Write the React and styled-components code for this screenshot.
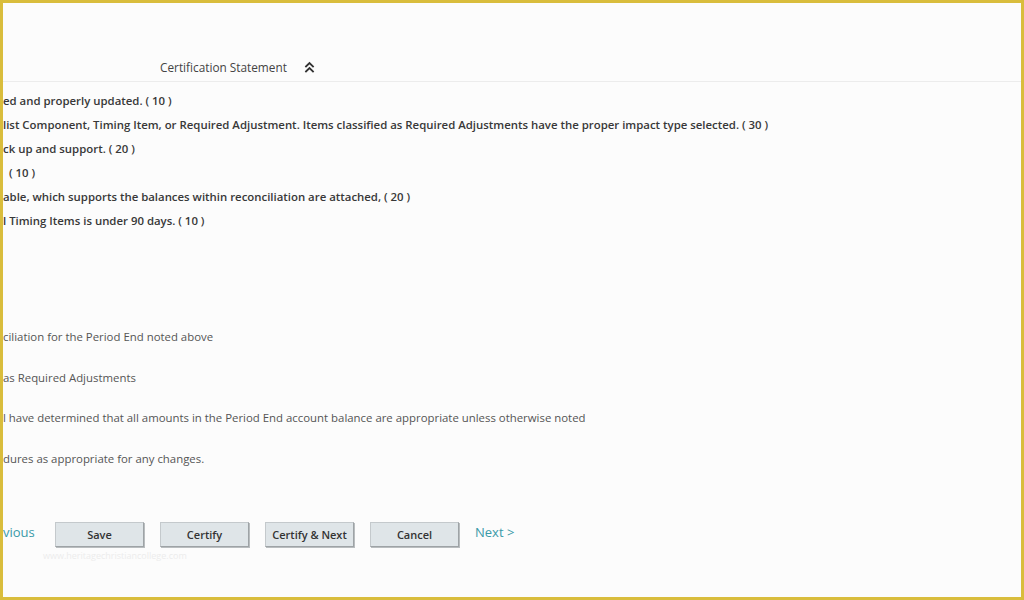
import React from 'react'
import styled, { createGlobalStyle } from 'styled-components'

const GlobalStyle = createGlobalStyle`
    body {
        margin: 0;
        background: #fcfcfc;
        font-family: "Open Sans", "Noto Sans", sans-serif;
    }
`;

const criteria = [
    'ed and properly updated. ( 10 )',
    'list Component, Timing Item, or Required Adjustment. Items classified as Required Adjustments have the proper impact type  selected. ( 30 )',
    'ck up and support. ( 20 )',
    '( 10 )',
    'able, which supports the balances within reconciliation are attached, ( 20 )',
    'l Timing Items is under 90 days. ( 10 )',
]

const statements = [
    'ciliation for the Period End noted above',
    'as Required Adjustments',
    'l have determined that all amounts in the Period End account balance are appropriate unless otherwise noted',
    'dures as appropriate for any changes.',
]

const actions = ['Save', 'Certify', 'Certify & Next', 'Cancel']

function DoubleChevron() {
    return (
        <svg width="11" height="12" viewBox="0 0 11 12" fill="none" stroke="#333" strokeWidth="1.8" strokeLinecap="square">
            <path d="M2 5.5 L5.5 2 L9 5.5" />
            <path d="M2 10.5 L5.5 7 L9 10.5" />
        </svg>
    )
}

function App() {
  return (
    <>
      <GlobalStyle />
      <Frame>
        <Header>
            <Title>Certification Statement</Title>
            <DoubleChevron />
        </Header>
        <Criteria>
            {criteria.map((c, i) => <Criterion key={i} indent={i === 3 ? 6 : 0}>{c}</Criterion>)}
        </Criteria>
        <Statements>
            {statements.map((s, i) => <Statement key={i}>{s}</Statement>)}
        </Statements>
        <Actions>
            <NavLink>vious</NavLink>
            {actions.map((a) => <ActionButton key={a}>{a}</ActionButton>)}
            <NavLink>Next &gt;</NavLink>
        </Actions>
        <Watermark>www.heritagechristiancollege.com</Watermark>
      </Frame>
    </>
  )
}

const Frame = styled.div`
    width: 1024px;
    height: 600px;
    box-sizing: border-box;
    border: 3px solid #d9bd3c;
    background: #fcfcfc;
    overflow: hidden;
    display: flex;
    flex-direction: column;
    color: #333;
`;

const Header = styled.div`
    height: 79px;
    flex-shrink: 0;
    box-sizing: border-box;
    display: flex;
    align-items: center;
    gap: 17px;
    padding: 50px 0 0 157px;
    border-bottom: 1px solid #ececec;
`;

const Title = styled.span`
    font-size: 11.8px;
    color: #444;
`;

const Criteria = styled.div`
    display: flex;
    flex-direction: column;
    padding-top: 7px;
`;

const Criterion = styled.div`
    font-size: 11.4px;
    font-weight: 600;
    line-height: 24px;
    white-space: nowrap;
    padding-left: ${p => p.indent}px;
    color: #383838;
`;

const Statements = styled.div`
    display: flex;
    flex-direction: column;
    margin-top: 84px;
`;

const Statement = styled.div`
    font-size: 11.4px;
    line-height: 40.7px;
    white-space: nowrap;
    color: #555;
`;

const Actions = styled.div`
    display: flex;
    align-items: center;
    gap: 16px;
    margin-top: 42px;
`;

const NavLink = styled.a`
    font-size: 13px;
    color: #3a9aa8;
    cursor: pointer;
    margin-top: -4px;
    min-width: 36px;
`;

const ActionButton = styled.button`
    width: 89px;
    height: 25px;
    font-family: "Open Sans", "Noto Sans", sans-serif;
    font-size: 11px;
    font-weight: 600;
    color: #333;
    background: #dfe5e8;
    border: 1px solid #c4c9cc;
    border-right-color: #9ea3a6;
    border-bottom-color: #9ea3a6;
    box-shadow: 1px 1px 0 #b9bdbf;
    padding: 0;
`;

const Watermark = styled.div`
    font-size: 9px;
    color: #ececec;
    padding-left: 40px;
    margin-top: 2px;
`;

export default App
